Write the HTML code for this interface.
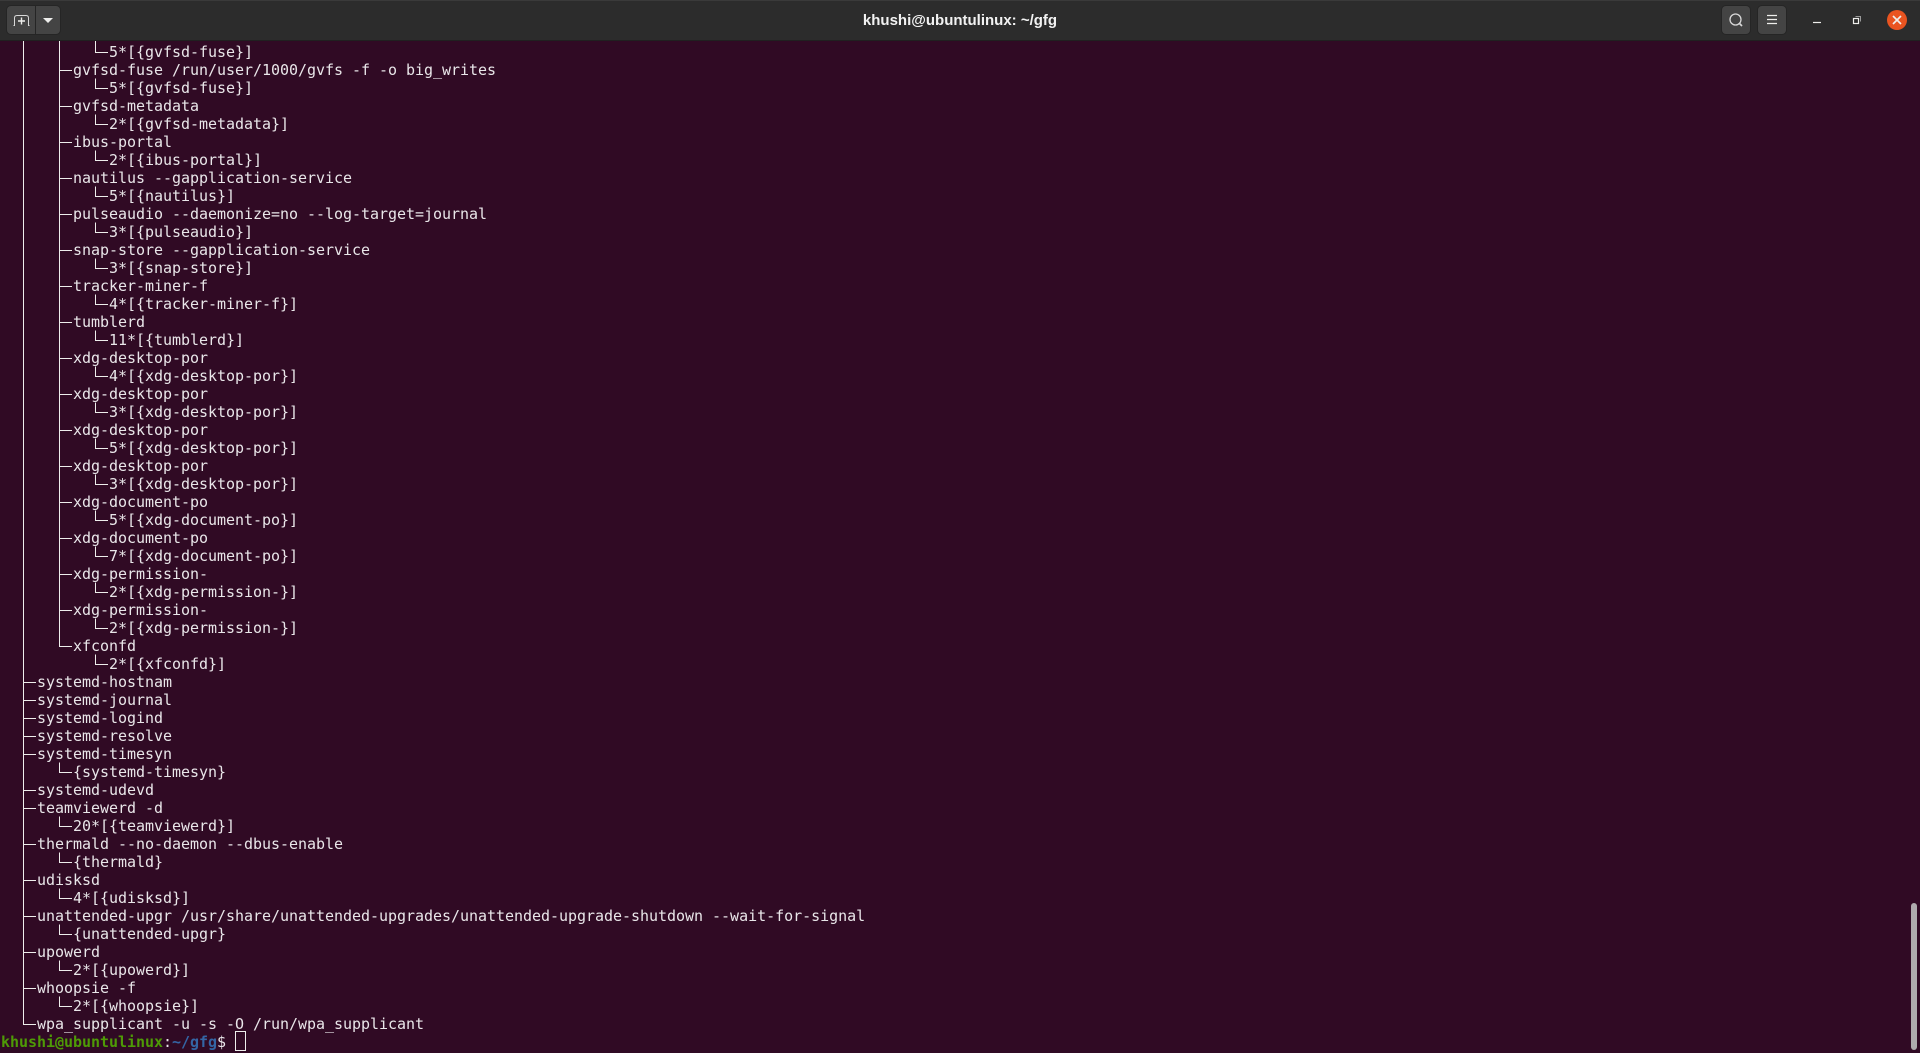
<!DOCTYPE html>
<html>
<head>
<meta charset="utf-8">
<title>khushi@ubuntulinux: ~/gfg</title>
<style>
html,body{margin:0;padding:0;width:1920px;height:1053px;overflow:hidden;background:#300a24}
#bar{position:absolute;left:0;top:0;width:1920px;height:41px;background:#2c2c2c;border-top:1px solid #3a3a3a;box-sizing:border-box;border-bottom:1px solid #202020}
#title{position:absolute;left:763px;width:394px;top:10px;text-align:center;font:bold 15px/20px "Liberation Sans",sans-serif;color:#f2f2f2;letter-spacing:0}
.btn{position:absolute;top:6px;height:28px;background:#444;border-radius:4px;box-shadow:0 0 0 1px #252525}
svg{position:absolute;left:0;top:0}
#term{position:absolute;left:1px;top:43px;margin:0;font:15px/18px "DejaVu Sans Mono","Liberation Mono",monospace;letter-spacing:-.03px;color:#e9e6e9;white-space:pre}
.g{color:#4e9a06;font-weight:bold}
.b{color:#3465a4;font-weight:bold}
#sb{position:absolute;left:1911px;top:903px;width:6px;height:147px;background:#aeaaad;border-radius:3px}
#cur{position:absolute;left:235px;top:1031px;width:9px;height:18px;border:1px solid #eeeeec}
</style>
</head>
<body>
<pre id="term">            5*[{gvfsd-fuse}]
        gvfsd-fuse /run/user/1000/gvfs -f -o big_writes
            5*[{gvfsd-fuse}]
        gvfsd-metadata
            2*[{gvfsd-metadata}]
        ibus-portal
            2*[{ibus-portal}]
        nautilus --gapplication-service
            5*[{nautilus}]
        pulseaudio --daemonize=no --log-target=journal
            3*[{pulseaudio}]
        snap-store --gapplication-service
            3*[{snap-store}]
        tracker-miner-f
            4*[{tracker-miner-f}]
        tumblerd
            11*[{tumblerd}]
        xdg-desktop-por
            4*[{xdg-desktop-por}]
        xdg-desktop-por
            3*[{xdg-desktop-por}]
        xdg-desktop-por
            5*[{xdg-desktop-por}]
        xdg-desktop-por
            3*[{xdg-desktop-por}]
        xdg-document-po
            5*[{xdg-document-po}]
        xdg-document-po
            7*[{xdg-document-po}]
        xdg-permission-
            2*[{xdg-permission-}]
        xdg-permission-
            2*[{xdg-permission-}]
        xfconfd
            2*[{xfconfd}]
    systemd-hostnam
    systemd-journal
    systemd-logind
    systemd-resolve
    systemd-timesyn
        {systemd-timesyn}
    systemd-udevd
    teamviewerd -d
        20*[{teamviewerd}]
    thermald --no-daemon --dbus-enable
        {thermald}
    udisksd
        4*[{udisksd}]
    unattended-upgr /usr/share/unattended-upgrades/unattended-upgrade-shutdown --wait-for-signal
        {unattended-upgr}
    upowerd
        2*[{upowerd}]
    whoopsie -f
        2*[{whoopsie}]
    wpa_supplicant -u -s -O /run/wpa_supplicant
<span class="g">khushi@ubuntulinux</span>:<span class="b">~/gfg</span>$ </pre>
<div id="cur"></div>
<svg width="1920" height="1053" fill="none" stroke="#eeeeec" stroke-width="1">
<path d="M23.5 41V1024.5H36
M23 682.5H36 M23 700.5H36 M23 718.5H36 M23 736.5H36 M23 754.5H36 M23 790.5H36 M23 808.5H36 M23 844.5H36 M23 880.5H36 M23 916.5H36 M23 952.5H36 M23 988.5H36"/>
<path d="M59.5 41V646.5H72
M59 70.5H72 M59 106.5H72 M59 142.5H72 M59 178.5H72 M59 214.5H72 M59 250.5H72 M59 286.5H72 M59 322.5H72 M59 358.5H72 M59 394.5H72 M59 430.5H72 M59 466.5H72 M59 502.5H72 M59 538.5H72 M59 574.5H72 M59 610.5H72"/>
<path d="M95.5 41V52.5H108 M95.5 78.5V88.5H108 M95.5 114.5V124.5H108 M95.5 150.5V160.5H108 M95.5 186.5V196.5H108 M95.5 222.5V232.5H108 M95.5 258.5V268.5H108 M95.5 294.5V304.5H108 M95.5 330.5V340.5H108 M95.5 366.5V376.5H108 M95.5 402.5V412.5H108 M95.5 438.5V448.5H108 M95.5 474.5V484.5H108 M95.5 510.5V520.5H108 M95.5 546.5V556.5H108 M95.5 582.5V592.5H108 M95.5 618.5V628.5H108 M95.5 654.5V664.5H108"/>
<path d="M59.5 762.5V772.5H72 M59.5 816.5V826.5H72 M59.5 852.5V862.5H72 M59.5 888.5V898.5H72 M59.5 924.5V934.5H72 M59.5 960.5V970.5H72 M59.5 996.5V1006.5H72"/>
</svg>
<div id="bar">
<div id="title">khushi@ubuntulinux: ~/gfg</div>
</div>
<div class="btn" style="left:7px;width:28px;border-radius:4px 0 0 4px"></div>
<div class="btn" style="left:36px;width:24px;border-radius:0 4px 4px 0"></div>
<div class="btn" style="left:1722px;width:28px"></div>
<div class="btn" style="left:1758px;width:28px"></div>
<svg width="1920" height="41" fill="none" stroke="#eeeeec" stroke-width="1">
<path d="M14.5 26V18Q14.5 15.5 17 15.5H26Q28.5 15.5 28.5 18V26" stroke="#d8d8d8"/>
<path d="M13.5 25.5H15M28 25.5H29.5" stroke="#d8d8d8"/>
<path d="M21.5 17.5V24.5M18 21H25" stroke-width="1.4"/>
<path d="M43 18H53L48 23Z" fill="#eeeeec" stroke="none"/>
<circle cx="1735.5" cy="19.5" r="5.5" stroke="#d8d8d8" stroke-width="1.3"/>
<path d="M1739.5 23.5L1742 26" stroke="#d8d8d8" stroke-width="1.7"/>
<path d="M1767 15.5H1777M1767 19.5H1777M1767 23.5H1777" stroke-width="1.2"/>
<path d="M1813 22.5H1821" stroke-width="1.2"/>
<rect x="1853.5" y="18.5" width="5" height="5" stroke-width="1.2"/>
<path d="M1855.5 16.5H1860.5V21.5" stroke="#9a9a9a"/>
<circle cx="1897" cy="20" r="10" fill="#e95420" stroke="none"/>
<path d="M1893 16L1901 24M1901 16L1893 24" stroke-width="1.7"/>
</svg>
<div id="sb"></div>
</body>
</html>
